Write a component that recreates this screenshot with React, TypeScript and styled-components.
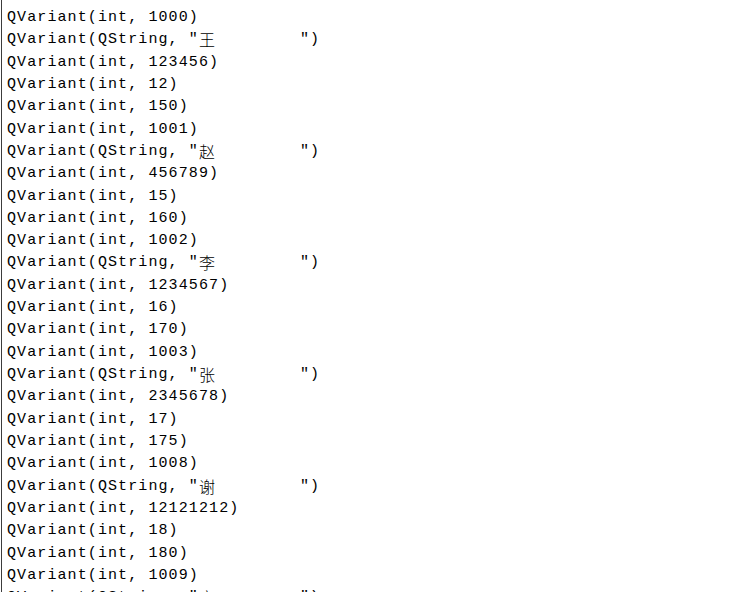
import React from "react";
import styled, { createGlobalStyle } from "styled-components";

const Global = createGlobalStyle`
  html, body { margin: 0; padding: 0; background: #ffffff; }
  body { overflow: hidden; }
`;

const Console = styled.div`
  box-sizing: border-box;
  width: 750px;
  height: 592px;
  margin-left: 1px;
  border-left: 1px solid #3c3c3c;
  padding: 7px 0 0 5px;
  overflow: hidden;
  background: #ffffff;
  color: #000000;
  font-family: "Liberation Mono", "DejaVu Sans Mono", monospace;
  font-size: 15px;
  letter-spacing: 1.1px;
`;

const Line = styled.div`
  height: 22.32px;
  line-height: 22.32px;
  white-space: pre;
`;

const Wide = styled.span`
  display: inline-block;
  vertical-align: top;
  width: 20.2px;
  line-height: 20px;
  font-family: "Noto Sans CJK SC", sans-serif;
  font-size: 16px;
  font-weight: 300;
  letter-spacing: 0;
  text-align: left;
`;

type Rec = { id: number; name: string; phone: number; age: number; h: number };

const records: Rec[] = [
  { id: 1000, name: "王", phone: 123456, age: 12, h: 150 },
  { id: 1001, name: "赵", phone: 456789, age: 15, h: 160 },
  { id: 1002, name: "李", phone: 1234567, age: 16, h: 170 },
  { id: 1003, name: "张", phone: 2345678, age: 17, h: 175 },
  { id: 1008, name: "谢", phone: 12121212, age: 18, h: 180 },
];

const IntLine = ({ v }: { v: number }) => <Line>{`QVariant(int, ${v})`}</Line>;
const StrLine = ({ ch }: { ch: string }) => (
  <Line>
    {`QVariant(QString, "`}
    <Wide>{ch}</Wide>
    {`        ")`}
  </Line>
);

export default function App() {
  return (
    <>
      <Global />
      <Console>
        {records.map((r) => (
          <React.Fragment key={r.id}>
            <IntLine v={r.id} />
            <StrLine ch={r.name} />
            <IntLine v={r.phone} />
            <IntLine v={r.age} />
            <IntLine v={r.h} />
          </React.Fragment>
        ))}
        <IntLine v={1009} />
        <StrLine ch="宋" />
      </Console>
    </>
  );
}
